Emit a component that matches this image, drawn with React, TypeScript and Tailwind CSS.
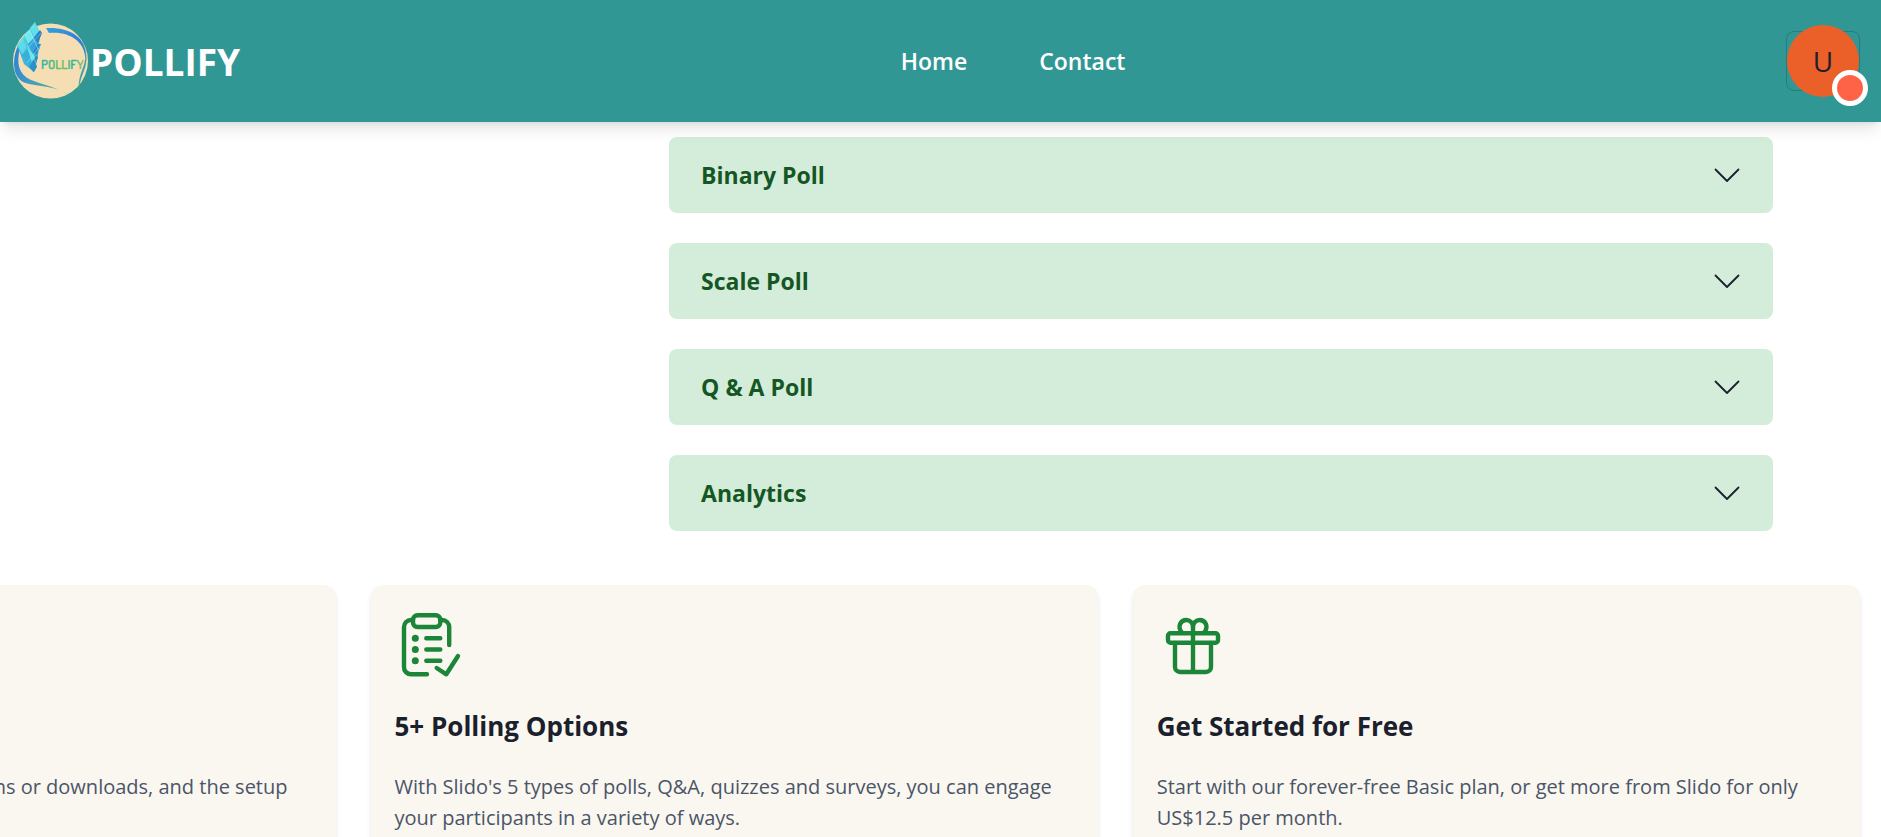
import type { ReactNode } from "react";

const polls = ["Binary Poll", "Scale Poll", "Q & A Poll", "Analytics"];

function Logo() {
  return (
    <svg viewBox="0 0 78 78" className="size-[78px]" role="img" aria-label="Pollify logo">
      <defs>
        <linearGradient id="swoosh" x1="0" y1="0" x2="1" y2="0.3">
          <stop offset="0" stopColor="#2f7fdc" />
          <stop offset="0.45" stopColor="#3f9fc0" />
          <stop offset="1" stopColor="#52b788" />
        </linearGradient>
        <linearGradient id="arc" x1="0" y1="0" x2="1" y2="1">
          <stop offset="0" stopColor="#35a0dc" />
          <stop offset="0.5" stopColor="#2f7fdc" />
          <stop offset="1" stopColor="#52b788" />
        </linearGradient>
        <linearGradient id="word" x1="0" y1="0" x2="1" y2="0">
          <stop offset="0" stopColor="#27b5b0" />
          <stop offset="0.5" stopColor="#6fbf5a" />
          <stop offset="0.75" stopColor="#27b5a0" />
          <stop offset="1" stopColor="#9cc455" />
        </linearGradient>
      </defs>
      <circle cx="38.500" cy="39" r="37.500" fill="#f5deb3" />
      <path d="M6 24C0 36 0 55 12 60.500C25 65 46 63 61 76C47 65 29 62.500 18 57.500C7 52 4 42 8 26Z" fill="url(#swoosh)" />
      <path d="M34 6C58 5 75 15 74.500 37C73.500 51 68 53 67 70C65.500 52 72.300 48 73.300 36C72.500 20 58 9 37 11Z" fill="url(#arc)" />
      <path d="M5 23L23 0L28 11L26 34L22 50L12 42Z" fill="#39b6da" />
      <path d="M12 13L18 7L22 16L16 22Z" fill="#70e9ec" />
      <path d="M18 6L23 0L27 9L22 15Z" fill="#5fe0e8" />
      <path d="M5 23L11 16L15 25L10 32Z" fill="#5bdbe6" />
      <path d="M16 22L22 16L27 25L21 31Z" fill="#37a3dc" />
      <path d="M22 16L28 8L30 11L26 21Z" fill="#2c7fc4" />
      <path d="M10 32L15 25L25 44L21 50Z" fill="#3aaedb" />
      <path d="M15 25L20 31L25 38L20 41Z" fill="#65e2e8" />
      <path d="M21 30L26 22L29 22L27 28L24 33Z" fill="#2c86c6" />
      <path d="M20 40L24 34L26 35L23 45Z" fill="#2b8bc5" />
      <path d="M17 45L21 39L25 45L22 50Z" fill="#2d91c9" />
      <path d="M11 14L25 43M17 8L28 31M5 24L22 4M10 32L29 11M15 41L29 23" fill="none" stroke="#a5ecef" strokeWidth="0.500" />
      <text x="29" y="47" fontSize="13" fontWeight="500" fill="url(#word)" stroke="url(#word)" strokeWidth="0.400" className="font-['Dosis','Liberation_Sans_Narrow',sans-serif]">
        POLLIFY
      </text>
    </svg>
  );
}

function ChecklistIcon() {
  return (
    <svg viewBox="0 0 72 72" className="size-[72px]" fill="none" stroke="#1b8538" strokeWidth="4.400" strokeLinecap="round" strokeLinejoin="round" aria-hidden="true">
      <path d="M18 11H16a7 7 0 0 0-7 7V58a7 7 0 0 0 7 7.300H32" />
      <path d="M45.300 11H47a7 7 0 0 1 7.200 7V36" />
      <rect x="18" y="6.300" width="27.300" height="11.700" rx="4.500" />
      <path d="M31.300 29.300H45.300M31.300 40.500H45.300M31.300 51.700H45.300" />
      <path d="M41.700 59L51.300 65.300L63 47" />
      <g fill="#1b8538" stroke="none">
        <circle cx="20.300" cy="29.300" r="3.500" />
        <circle cx="20.300" cy="40.500" r="3.500" />
        <circle cx="20.300" cy="51.700" r="3.500" />
      </g>
    </svg>
  );
}

function GiftIcon() {
  return (
    <svg viewBox="0 0 72 72" className="size-[72px]" fill="none" stroke="#1b8538" strokeWidth="4.400" strokeLinecap="round" strokeLinejoin="round" aria-hidden="true">
      <rect x="11" y="24.300" width="50" height="9.400" rx="2.500" />
      <path d="M18 34V58a5 5 0 0 0 5 5H49a5 5 0 0 0 5-5V34M36 18V63" />
      <path d="M24.500 23C20 17 24 11 29.300 11C33 11 36 14 36 18C36 14 39 11 42.700 11C48 11 52 17 47.500 23" />
    </svg>
  );
}

function FeatureCard({ icon, title, children }: { icon?: ReactNode; title?: string; children: ReactNode }) {
  return (
    <article className="w-[39.1%] shrink-0 rounded-xl bg-[#faf7f0] p-6 shadow-md">
      <div className="h-[72px]">{icon}</div>
      <h3 className="mt-[27px] h-9 text-[26px] leading-9 font-bold text-[#1a202c]">{title}</h3>
      {children}
    </article>
  );
}

export default function App() {
  return (
    <div className="min-h-screen overflow-x-hidden bg-white font-['Open_Sans','Noto_Sans',sans-serif]">
      <header className="relative z-10 flex items-center justify-between bg-[#319795] py-[22px] pr-[21px] pl-3 shadow-lg">
        <a href="#" className="flex items-center text-[37px] leading-none font-bold text-white">
          <Logo />
          POLLIFY
        </a>
        <nav className="flex gap-[72px] text-[23px] leading-8 font-semibold text-white">
          <a href="#home">Home</a>
          <a href="#contact">Contact</a>
        </nav>
        <button type="button" aria-label="User menu" className="relative flex h-[60px] w-[74px] items-center justify-center rounded-lg border border-[#267d7c]">
          <span className="flex size-[72px] shrink-0 items-center justify-center rounded-full bg-[#eb6029] text-[28px] text-[#1a202c]">U</span>
          <span className="absolute -right-[9px] -bottom-4 size-9 rounded-full border-5 border-white bg-[#ff6347]" />
        </button>
      </header>

      <main>
        <section className="px-[108px] pt-[15px]">
          <div className="ml-auto flex w-[66.3%] flex-col gap-[30px]">
            {polls.map((name) => (
              <button key={name} type="button" className="flex h-[76px] items-center justify-between rounded-lg bg-[#d4edda] px-8 text-[23px] font-bold text-[#155724]">
                {name}
                <svg viewBox="0 0 28 28" className="size-7" fill="none" stroke="#1a202c" strokeWidth="1.800" strokeLinecap="round" strokeLinejoin="round" aria-hidden="true">
                  <path d="M2.500 8.500L14 20L25.500 8.500" />
                </svg>
              </button>
            ))}
          </div>
        </section>

        <section className="mt-[54px] flex justify-end gap-[35px] overflow-hidden pr-[21px] pb-6">
          <FeatureCard>
            <p className="mt-[27px] mr-6 text-right text-[20px] leading-[31px] text-[#4a5568]">installations or downloads, and the setup</p>
          </FeatureCard>
          <FeatureCard icon={<ChecklistIcon />} title="5+ Polling Options">
            <p className="mt-[27px] text-[20px] leading-[31px] text-[#4a5568]">
              With Slido's 5 types of polls, Q&amp;A, quizzes and surveys, you can engage your participants in a variety of ways.
            </p>
          </FeatureCard>
          <FeatureCard icon={<GiftIcon />} title="Get Started for Free">
            <p className="mt-[27px] text-[20px] leading-[31px] text-[#4a5568]">
              Start with our forever-free Basic plan, or get more from Slido for only US$12.5 per month.
            </p>
          </FeatureCard>
        </section>
      </main>
    </div>
  );
}
